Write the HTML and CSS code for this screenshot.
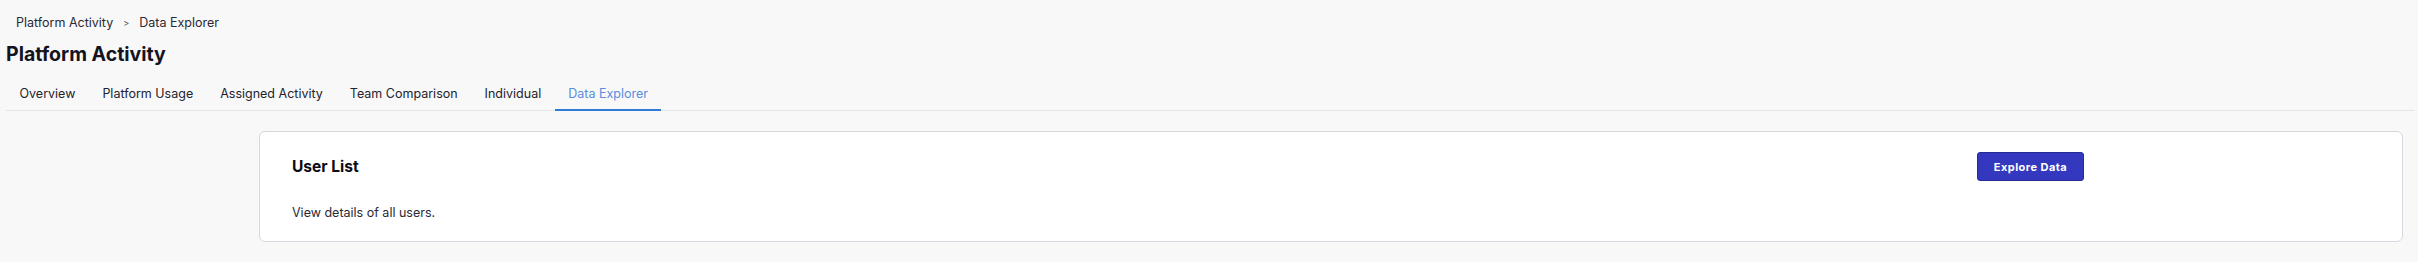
FILE: index.html
```html
<!DOCTYPE html>
<html lang="en">
<head>
<meta charset="utf-8">
<title>Platform Activity - Data Explorer</title>
<link rel="stylesheet" href="styles.css">
</head>
<body>
  <div class="page">
    <nav class="breadcrumb">
      <span class="crumb">Platform Activity</span>
      <span class="sep">&gt;</span>
      <span class="crumb">Data Explorer</span>
    </nav>
    <h1 class="title">Platform Activity</h1>
    <div class="tabs">
      <a class="tab">Overview</a>
      <a class="tab">Platform Usage</a>
      <a class="tab">Assigned Activity</a>
      <a class="tab">Team Comparison</a>
      <a class="tab">Individual</a>
      <a class="tab active">Data Explorer</a>
    </div>
    <main class="content">
      <section class="card">
        <div class="card-header">
          <h2 class="card-title">User List</h2>
          <button class="btn-primary">Explore Data</button>
        </div>
        <p class="card-desc">View details of all users.</p>
      </section>
    </main>
  </div>
</body>
</html>
```

FILE: styles.css
```css
* { box-sizing: border-box; }

html, body {
  margin: 0;
  padding: 0;
  background: #f8f8f8;
}

body {
  font-family: Inter, "Noto Sans", sans-serif;
  color: #1c1c28;
  height: 262px;
  overflow: hidden;
}

.page {
  padding: 0 3px 0 6px;
}

.breadcrumb {
  display: flex;
  align-items: center;
  gap: 10px;
  padding: 15px 0 0 10px;
  font-size: 12.5px;
  line-height: 15px;
  color: #2a2a33;
}

.breadcrumb .sep {
  font-size: 9px;
  color: #555;
}

.title {
  margin: 11px 0 0 0;
  font-size: 19.5px;
  font-weight: 700;
  color: #14141f;
  line-height: 27px;
}

.tabs {
  display: flex;
  margin-top: 9px;
  border-bottom: 1px solid #e4e4e6;
}

.tab {
  padding: 9px 13.5px 8px;
  font-size: 12.5px;
  line-height: 15px;
  color: #23232e;
  border-bottom: 2px solid transparent;
  margin-bottom: -1px;
}

.tab.active {
  color: #5a8ddf;
  border-bottom-color: #2f7bd8;
}

.content {
  padding: 20px 12px 0 253px;
}

.card {
  background: #ffffff;
  border: 1px solid #d6d8e0;
  border-radius: 6px;
  padding: 20px 32px 21px;
}

.card-header {
  display: flex;
  align-items: center;
  justify-content: space-between;
  padding-right: 286px;
}

.card-title {
  margin: 0;
  font-size: 15.5px;
  font-weight: 700;
  color: #0c0c14;
}

.btn-primary {
  width: 107px;
  height: 29px;
  background: #3338bf;
  border: 1px solid #272b96;
  border-radius: 3px;
  color: #ffffff;
  font-family: Inter, "Noto Sans", sans-serif;
  font-size: 11px;
  font-weight: 700;
  letter-spacing: 0.45px;
  padding: 0;
}

.card-desc {
  margin: 24px 0 0 0;
  font-size: 12.5px;
  line-height: 15px;
  color: #2a2a36;
}
```
